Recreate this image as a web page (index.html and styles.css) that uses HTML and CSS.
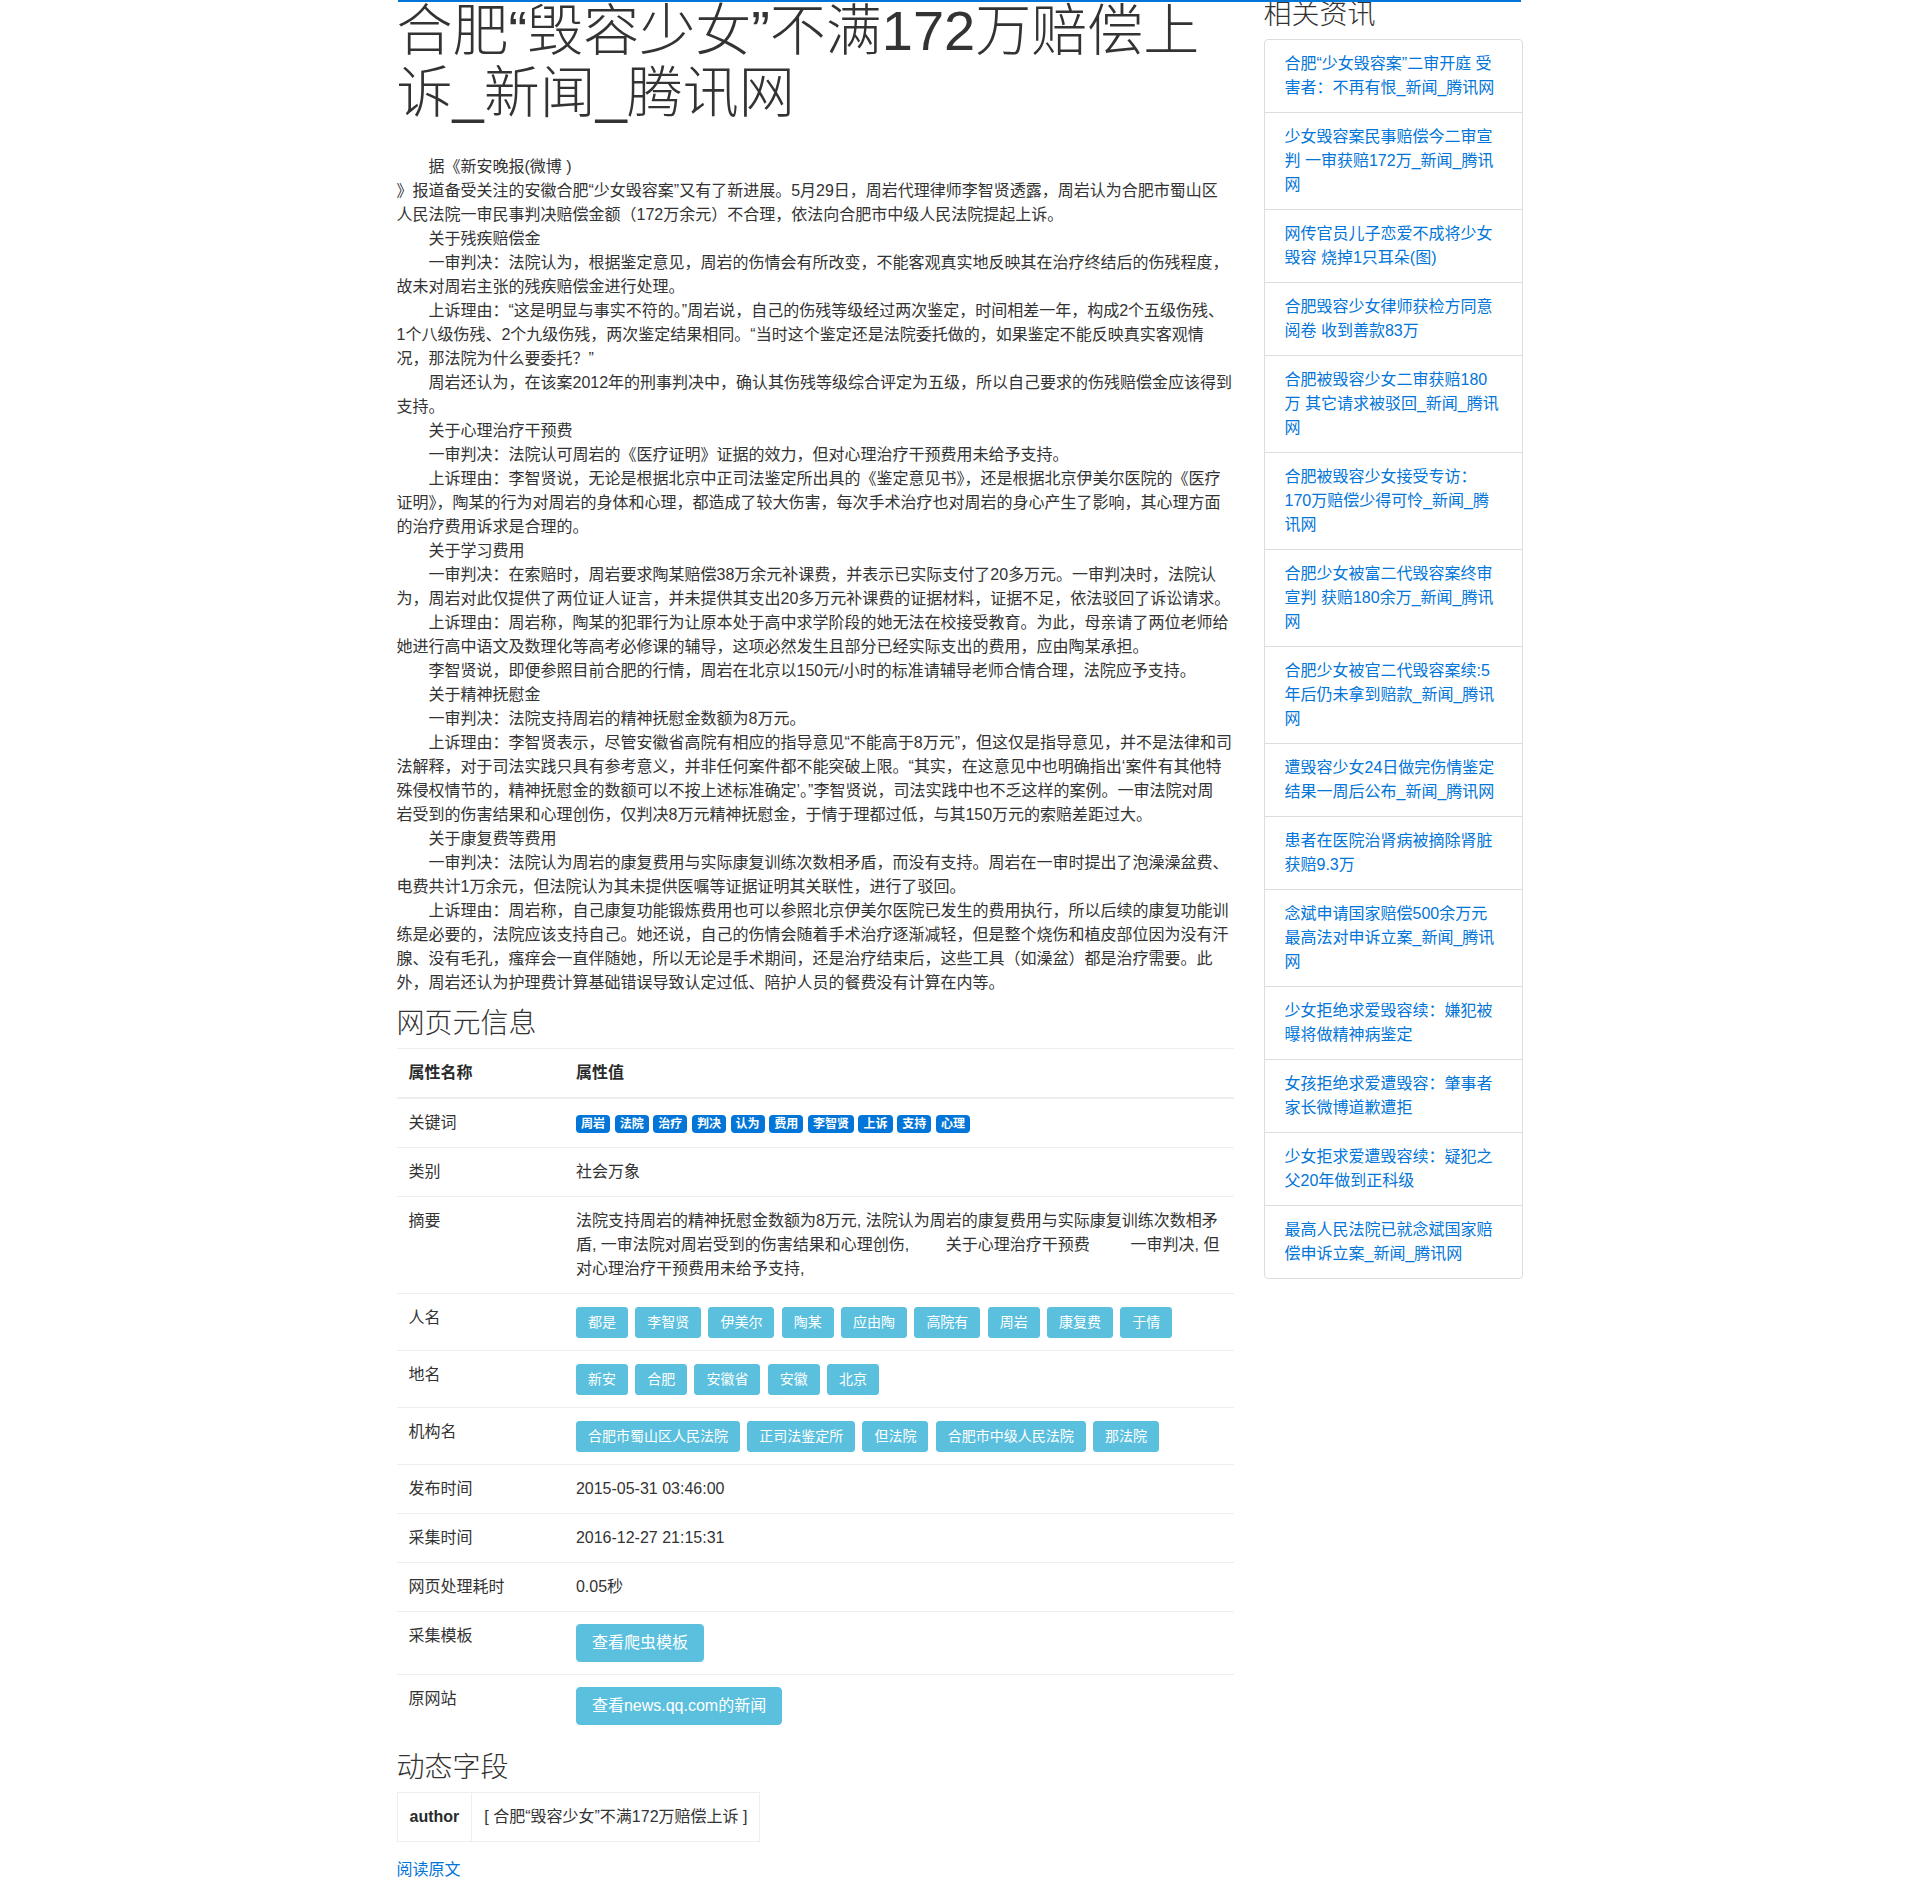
FILE: index.html
```html
<!DOCTYPE html>
<html lang="zh-CN">
<head>
<meta charset="utf-8">
<title>合肥“毁容少女”不满172万赔偿上诉_新闻_腾讯网</title>
<link rel="stylesheet" href="styles.css">
</head>
<body>
<div class="container">
  <div class="topline"></div>
  <div class="layout">
    <main class="main">
      <h1 class="title">合肥“毁容少女”不满172万赔偿上诉_新闻_腾讯网</h1>
      <div class="article">　　据《新安晚报(微博 )<br>》报道备受关注的安徽合肥“少女毁容案”又有了新进展。5月29日，周岩代理律师李智贤透露，周岩认为合肥市蜀山区<br>人民法院一审民事判决赔偿金额（172万余元）不合理，依法向合肥市中级人民法院提起上诉。<br>　　关于残疾赔偿金<br>　　一审判决：法院认为，根据鉴定意见，周岩的伤情会有所改变，不能客观真实地反映其在治疗终结后的伤残程度，<br>故未对周岩主张的残疾赔偿金进行处理。<br>　　上诉理由：“这是明显与事实不符的。”周岩说，自己的伤残等级经过两次鉴定，时间相差一年，构成2个五级伤残、<br>1个八级伤残、2个九级伤残，两次鉴定结果相同。“当时这个鉴定还是法院委托做的，如果鉴定不能反映真实客观情<br>况，那法院为什么要委托？”<br>　　周岩还认为，在该案2012年的刑事判决中，确认其伤残等级综合评定为五级，所以自己要求的伤残赔偿金应该得到<br>支持。<br>　　关于心理治疗干预费<br>　　一审判决：法院认可周岩的《医疗证明》证据的效力，但对心理治疗干预费用未给予支持。<br>　　上诉理由：李智贤说，无论是根据北京中正司法鉴定所出具的《鉴定意见书》，还是根据北京伊美尔医院的《医疗<br>证明》，陶某的行为对周岩的身体和心理，都造成了较大伤害，每次手术治疗也对周岩的身心产生了影响，其心理方面<br>的治疗费用诉求是合理的。<br>　　关于学习费用<br>　　一审判决：在索赔时，周岩要求陶某赔偿38万余元补课费，并表示已实际支付了20多万元。一审判决时，法院认<br>为，周岩对此仅提供了两位证人证言，并未提供其支出20多万元补课费的证据材料，证据不足，依法驳回了诉讼请求。<br>　　上诉理由：周岩称，陶某的犯罪行为让原本处于高中求学阶段的她无法在校接受教育。为此，母亲请了两位老师给<br>她进行高中语文及数理化等高考必修课的辅导，这项必然发生且部分已经实际支出的费用，应由陶某承担。<br>　　李智贤说，即便参照目前合肥的行情，周岩在北京以150元/小时的标准请辅导老师合情合理，法院应予支持。<br>　　关于精神抚慰金<br>　　一审判决：法院支持周岩的精神抚慰金数额为8万元。<br>　　上诉理由：李智贤表示，尽管安徽省高院有相应的指导意见“不能高于8万元”，但这仅是指导意见，并不是法律和司<br>法解释，对于司法实践只具有参考意义，并非任何案件都不能突破上限。“其实，在这意见中也明确指出‘案件有其他特<br>殊侵权情节的，精神抚慰金的数额可以不按上述标准确定’。”李智贤说，司法实践中也不乏这样的案例。一审法院对周<br>岩受到的伤害结果和心理创伤，仅判决8万元精神抚慰金，于情于理都过低，与其150万元的索赔差距过大。<br>　　关于康复费等费用<br>　　一审判决：法院认为周岩的康复费用与实际康复训练次数相矛盾，而没有支持。周岩在一审时提出了泡澡澡盆费、<br>电费共计1万余元，但法院认为其未提供医嘱等证据证明其关联性，进行了驳回。<br>　　上诉理由：周岩称，自己康复功能锻炼费用也可以参照北京伊美尔医院已发生的费用执行，所以后续的康复功能训<br>练是必要的，法院应该支持自己。她还说，自己的伤情会随着手术治疗逐渐减轻，但是整个烧伤和植皮部位因为没有汗<br>腺、没有毛孔，瘙痒会一直伴随她，所以无论是手术期间，还是治疗结束后，这些工具（如澡盆）都是治疗需要。此<br>外，周岩还认为护理费计算基础错误导致认定过低、陪护人员的餐费没有计算在内等。</div>

      <h3 class="section-title">网页元信息</h3>
      <table class="meta">
        <thead>
          <tr><th class="key">属性名称</th><th>属性值</th></tr>
        </thead>
        <tbody>
          <tr><td class="key">关键词</td><td><span class="badge">周岩</span> <span class="badge">法院</span> <span class="badge">治疗</span> <span class="badge">判决</span> <span class="badge">认为</span> <span class="badge">费用</span> <span class="badge">李智贤</span> <span class="badge">上诉</span> <span class="badge">支持</span> <span class="badge">心理</span></td></tr>
          <tr><td class="key">类别</td><td>社会万象</td></tr>
          <tr><td class="key">摘要</td><td class="summary">法院支持周岩的精神抚慰金数额为8万元, 法院认为周岩的康复费用与实际康复训练次数相矛<br>盾, 一审法院对周岩受到的伤害结果和心理创伤,&nbsp;　　关于心理治疗干预费&nbsp;　　&nbsp;一审判决, 但<br>对心理治疗干预费用未给予支持,</td></tr>
          <tr><td class="key">人名</td><td><div class="tags"><a class="tag" href="#">都是</a><a class="tag" href="#">李智贤</a><a class="tag" href="#">伊美尔</a><a class="tag" href="#">陶某</a><a class="tag" href="#">应由陶</a><a class="tag" href="#">高院有</a><a class="tag" href="#">周岩</a><a class="tag" href="#">康复费</a><a class="tag" href="#">于情</a></div></td></tr>
          <tr><td class="key">地名</td><td><div class="tags"><a class="tag" href="#">新安</a><a class="tag" href="#">合肥</a><a class="tag" href="#">安徽省</a><a class="tag" href="#">安徽</a><a class="tag" href="#">北京</a></div></td></tr>
          <tr><td class="key">机构名</td><td><div class="tags"><a class="tag" href="#">合肥市蜀山区人民法院</a><a class="tag" href="#">正司法鉴定所</a><a class="tag" href="#">但法院</a><a class="tag" href="#">合肥市中级人民法院</a><a class="tag" href="#">那法院</a></div></td></tr>
          <tr><td class="key">发布时间</td><td>2015-05-31 03:46:00</td></tr>
          <tr><td class="key">采集时间</td><td>2016-12-27 21:15:31</td></tr>
          <tr><td class="key">网页处理耗时</td><td>0.05秒</td></tr>
          <tr><td class="key">采集模板</td><td><a class="btn" href="#">查看爬虫模板</a></td></tr>
          <tr><td class="key">原网站</td><td><a class="btn" href="#">查看news.qq.com的新闻</a></td></tr>
        </tbody>
      </table>

      <h3 class="section-title">动态字段</h3>
      <table class="dyn">
        <tr><th>author</th><td>[ 合肥“毁容少女”不满172万赔偿上诉 ]</td></tr>
      </table>
      <p class="read"><a href="#">阅读原文</a></p>
    </main>

    <aside class="side">
      <h3 class="section-title">相关资讯</h3>
      <ul class="list-group">
        <li class="item"><a href="#">合肥“少女毁容案”二审开庭 受害者：不再有恨_新闻_腾讯网</a></li>
        <li class="item"><a href="#">少女毁容案民事赔偿今二审宣判 一审获赔172万_新闻_腾讯网</a></li>
        <li class="item"><a href="#">网传官员儿子恋爱不成将少女毁容 烧掉1只耳朵(图)</a></li>
        <li class="item"><a href="#">合肥毁容少女律师获检方同意阅卷 收到善款83万</a></li>
        <li class="item"><a href="#">合肥被毁容少女二审获赔180万 其它请求被驳回_新闻_腾讯网</a></li>
        <li class="item"><a href="#">合肥被毁容少女接受专访：170万赔偿少得可怜_新闻_腾讯网</a></li>
        <li class="item"><a href="#">合肥少女被富二代毁容案终审宣判 获赔180余万_新闻_腾讯网</a></li>
        <li class="item"><a href="#">合肥少女被官二代毁容案续:5年后仍未拿到赔款_新闻_腾讯网</a></li>
        <li class="item"><a href="#">遭毁容少女24日做完伤情鉴定结果一周后公布_新闻_腾讯网</a></li>
        <li class="item"><a href="#">患者在医院治肾病被摘除肾脏获赔9.3万</a></li>
        <li class="item"><a href="#">念斌申请国家赔偿500余万元 最高法对申诉立案_新闻_腾讯网</a></li>
        <li class="item"><a href="#">少女拒绝求爱毁容续：嫌犯被曝将做精神病鉴定</a></li>
        <li class="item"><a href="#">女孩拒绝求爱遭毁容：肇事者家长微博道歉遭拒</a></li>
        <li class="item"><a href="#">少女拒求爱遭毁容续：疑犯之父20年做到正科级</a></li>
        <li class="item"><a href="#">最高人民法院已就念斌国家赔偿申诉立案_新闻_腾讯网</a></li>
      </ul>
    </aside>
  </div>
</div>
</body>
</html>
```

FILE: styles.css
```css
* {
  box-sizing: border-box;
}

body {
  margin: 0;
  background: #fff;
  color: #333;
  font-family: "Liberation Sans", "Noto Sans CJK SC", sans-serif;
  font-size: 16px;
  line-height: 1.5;
}

a {
  color: #0275d8;
  text-decoration: none;
}

.container {
  position: relative;
  width: 1126px;
  margin: 0 auto;
}

.topline {
  position: absolute;
  top: 0;
  left: 1px;
  right: 2px;
  height: 2px;
  background: #0275d8;
}

.layout {
  display: grid;
  grid-template-columns: 837px 259px;
  column-gap: 30px;
  align-items: start;
}

.title {
  margin: 0 0 32px;
  font-size: 56px;
  line-height: 1.1;
  font-weight: 300;
  color: #333;
}

.article {
  white-space: nowrap;
  margin-bottom: 14px;
}

.section-title {
  margin: 0 0 8px;
  font-size: 28px;
  line-height: 1.1;
  font-weight: 300;
  color: #333;
}

.meta {
  width: 100%;
  border-collapse: collapse;
  margin-bottom: 16px;
}

.meta th,
.meta td {
  padding: 12px;
  text-align: left;
  vertical-align: top;
  border-top: 1px solid #eceeef;
}

.meta thead th {
  border-bottom: 2px solid #eceeef;
  font-weight: 700;
  color: #292b2c;
}

.meta .key {
  width: 20%;
}

.meta .summary {
  white-space: nowrap;
}

.badge {
  display: inline-block;
  padding: 3px 5.1px;
  font-size: 12px;
  font-weight: 700;
  line-height: 1;
  color: #fff;
  background: #0275d8;
  border-radius: 4px;
}

.tags {
  display: flex;
  flex-wrap: wrap;
  gap: 7.3px;
  padding-top: 1px;
}

.tag {
  display: block;
  padding: 4px 11px;
  font-size: 14px;
  line-height: 21px;
  color: #fff;
  background: #5bc0de;
  border: 1px solid #5bc0de;
  border-radius: 3px;
}

.btn {
  display: inline-block;
  padding: 8px 15px;
  font-size: 16px;
  line-height: 20px;
  color: #fff;
  background: #5bc0de;
  border: 1px solid #5bc0de;
  border-radius: 4px;
}

.dyn {
  border-collapse: collapse;
  margin-bottom: 16px;
}

.dyn th,
.dyn td {
  padding: 12px;
  border: 1px solid #eceeef;
  text-align: left;
}

.dyn th {
  font-weight: 700;
  color: #292b2c;
}

.read {
  margin: 0;
}

.list-group {
  list-style: none;
  margin: 0;
  padding: 0;
}

.item {
  padding: 12px 20px;
  border: 1px solid #dddddd;
  margin-bottom: -1px;
}

.item:first-child {
  border-radius: 4px 4px 0 0;
}

.item:last-child {
  margin-bottom: 0;
  border-radius: 0 0 4px 4px;
}

.item a {
  display: block;
}
```
